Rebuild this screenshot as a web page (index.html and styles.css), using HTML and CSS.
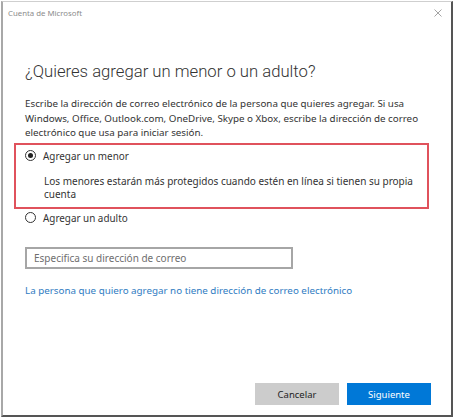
FILE: index.html
```html
<!DOCTYPE html>
<html lang="es">
<head>
    <meta charset="UTF-8">
    <meta name="viewport" content="width=device-width, initial-scale=1.0">
    <title>Cuenta de Microsoft</title>
    <link rel="stylesheet" href="styles.css">
</head>
<body>
    <div class="dialog">
        <div class="titlebar">
            <span class="title">Cuenta de Microsoft</span>
            <svg class="close" width="8" height="8" viewBox="0 0 8 8">
                <path d="M0.5 0.5 L7.5 7.5 M7.5 0.5 L0.5 7.5" stroke="#9a9a9a" stroke-width="0.9" fill="none"/>
            </svg>
        </div>

        <div class="content">
            <h1>¿Quieres agregar un menor o un adulto?</h1>
            <p class="intro">Escribe la dirección de correo electrónico de la persona que quieres agregar. Si usa<br>
                Windows, Office, Outlook.com, OneDrive, Skype o Xbox, escribe la dirección de correo<br>
                electrónico que usa para iniciar sesión.</p>

            <div class="highlight">
                <div class="option">
                    <span class="radio checked"></span>
                    <span>Agregar un menor</span>
                </div>
                <p class="option-note">Los menores estarán más protegidos cuando estén en línea si tienen su propia cuenta</p>
            </div>

            <div class="option option-adult">
                <span class="radio"></span>
                <span>Agregar un adulto</span>
            </div>

            <div class="email-box">Especifica su dirección de correo</div>

            <a class="link" href="#">La persona que quiero agregar no tiene dirección de correo electrónico</a>
        </div>

        <div class="footer">
            <button class="btn">Cancelar</button>
            <button class="btn btn-primary">Siguiente</button>
        </div>
    </div>
</body>
</html>
```

FILE: styles.css
```css
body {
    margin: 0;
    font-family: "Noto Sans", "Open Sans", sans-serif;
    color: #333;
    background: #fff;
}
.dialog {
    margin: 1px 0 0 1px;
    width: 448px;
    height: 413px;
    border-top: 1px solid #cfcfcf;
    border-left: 2px solid #a8a8a8;
    border-right: 2px solid #555;
    border-bottom: 2px solid #555;
    display: flex;
    flex-direction: column;
}
.titlebar {
    height: 22px;
    display: flex;
    align-items: center;
    justify-content: space-between;
    padding: 0 9px 0 5px;
}
.title {
    font-size: 7.8px;
    color: #8c8c8c;
}
.content {
    padding: 35px 0 0 22px;
}
h1 {
    margin: 0;
    font-family: Roboto, "Noto Sans", sans-serif;
    font-size: 16.7px;
    font-weight: 300;
    line-height: 26px;
    color: #333;
}
.intro {
    margin: 12px 0 0;
    font-size: 9.8px;
    line-height: 14.5px;
    white-space: nowrap;
    color: #333;
}
.highlight {
    margin: 2px 0 0 -11px;
    width: 402px;
    height: 62px;
    border: 2px solid #e0525c;
    padding: 0 0 0 9px;
}
.option {
    display: flex;
    align-items: center;
    height: 22px;
    font-size: 9.9px;
}
.radio {
    width: 9px;
    height: 9px;
    border: 1.5px solid #333;
    border-radius: 50%;
    margin-right: 7px;
    position: relative;
}
.radio.checked::after {
    content: "";
    position: absolute;
    left: 2px;
    top: 2px;
    width: 5px;
    height: 5px;
    border-radius: 50%;
    background: #222;
}
.option-note {
    margin: 8px 0 0 19px;
    font-size: 10px;
    line-height: 13px;
    width: 372px;
}
.option-adult {
    height: 18px;
}
.email-box {
    margin-top: 20px;
    width: 257px;
    height: 18px;
    border: 2px solid #a6a6a6;
    padding-left: 7px;
    font-size: 10px;
    line-height: 18px;
    color: #6e6e6e;
}
.link {
    display: block;
    margin-top: 15px;
    font-size: 9.8px;
    color: #2f7cc2;
    text-decoration: none;
}
.footer {
    margin-top: auto;
    display: flex;
    justify-content: flex-end;
    gap: 8px;
    padding: 0 20px 10px 0;
}
.btn {
    width: 84px;
    height: 22px;
    border: none;
    background: #cccccc;
    color: #222;
    font-family: "Noto Sans", "Open Sans", sans-serif;
    font-size: 9.5px;
    padding: 0;
}
.btn-primary {
    background: #0078d7;
    color: #fff;
}
```
